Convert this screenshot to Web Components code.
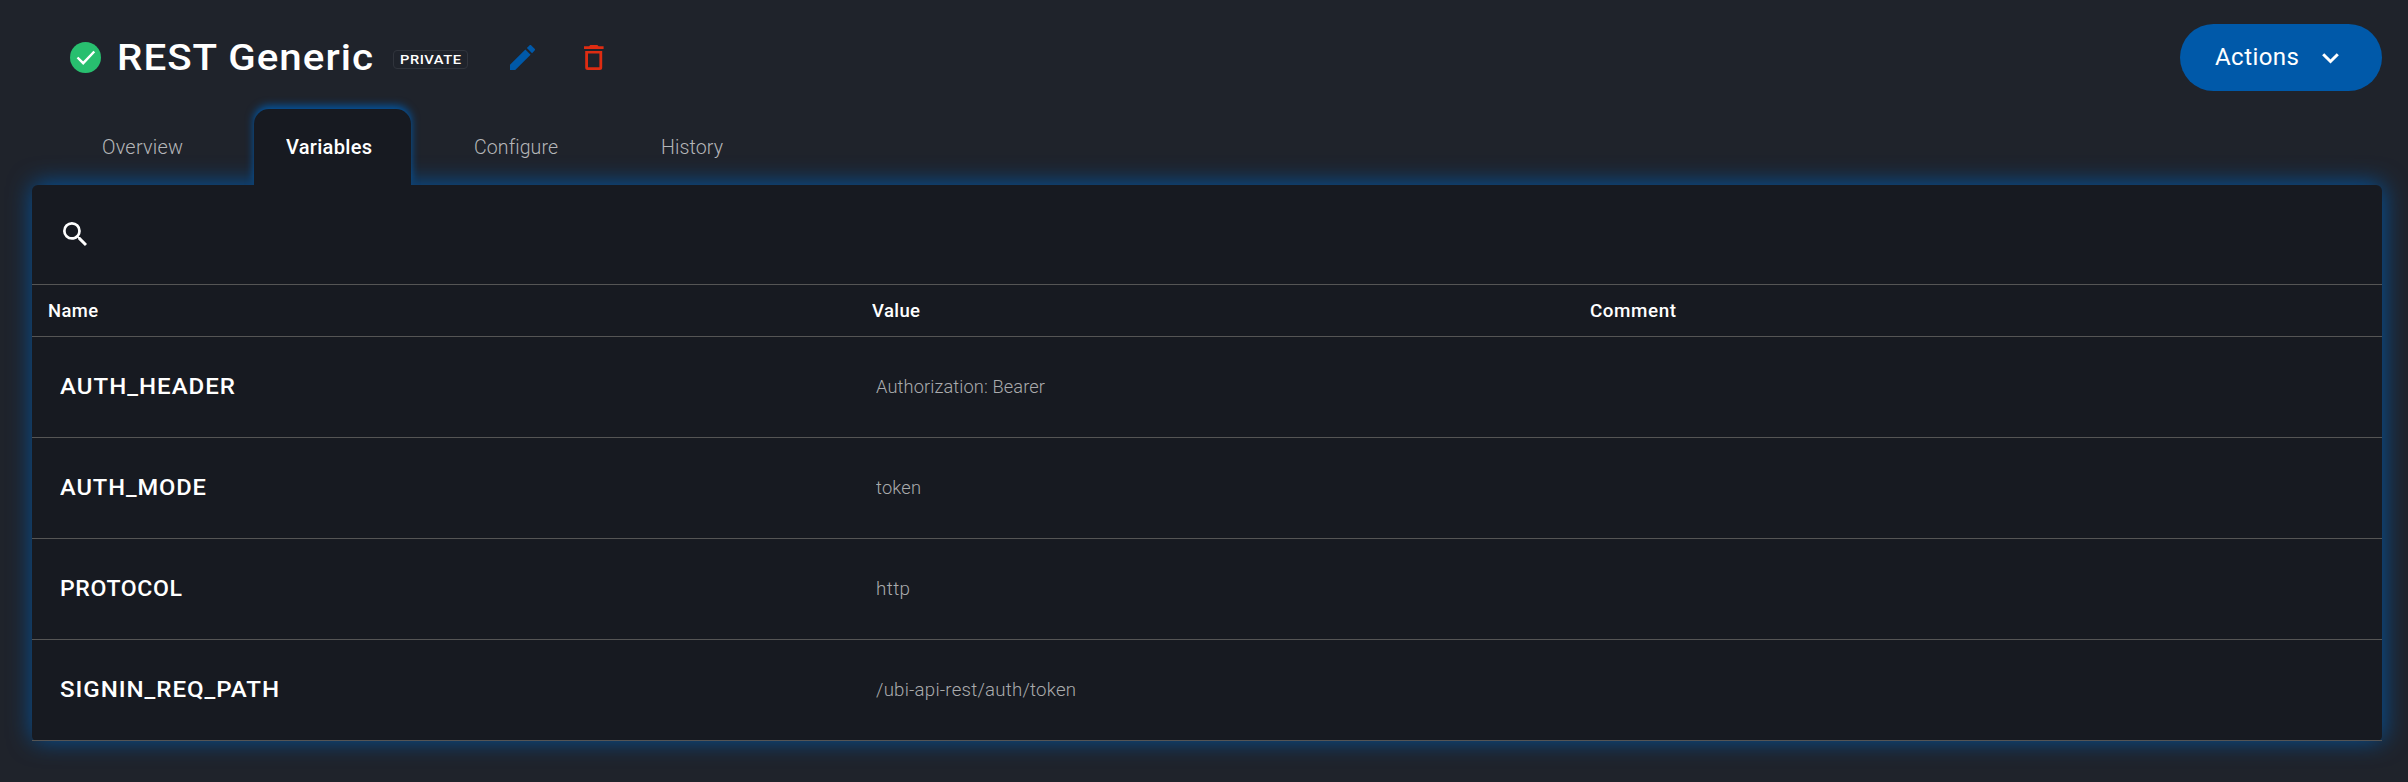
<!DOCTYPE html>
<html lang="en">
<head>
<meta charset="utf-8">
<title>REST Generic</title>
<style>
html,body{margin:0;height:100%;background:#1f232b}
body{font-family:Roboto,"Open Sans",sans-serif;color:#fff;overflow:hidden}
</style>
</head>
<body>
<app-page></app-page>
<script>
const define = (name, html, init) => {
  const t = document.createElement('template');
  t.innerHTML = html;
  customElements.define(name, class extends HTMLElement {
    constructor() {
      super();
      this.attachShadow({mode: 'open'}).append(t.content.cloneNode(true));
    }
    connectedCallback() { if (init) init(this, this.shadowRoot); }
  });
};

/* A single line of text, widened (mostly by glyph width, partly by tracking) to span the given width. */
define('fit-text', `<style>:host{display:block;white-space:nowrap;font-variant-ligatures:none}span{display:inline-block;transform-origin:0 50%}</style><span><slot></slot></span>`, (el, root) => {
  const span = root.querySelector('span');
  const n = el.textContent.length;
  const natural = span.getBoundingClientRect().width;
  const target = +el.getAttribute('width');
  if (target && natural) {
    const scale = 1 + (target / natural - 1) * 0.6;
    span.style.letterSpacing = ((target / scale - natural) / (n - 1)).toFixed(3) + 'px';
    span.style.transform = 'scaleX(' + scale.toFixed(4) + ')';
    el.style.width = target + 'px';
  }
});

define('status-icon', `<style>:host{display:block;width:31px;height:31px}svg{display:block}</style>
<svg width="31" height="31" viewBox="0 0 31 31"><circle cx="15.5" cy="15.5" r="15.5" fill="#28bf6f"/><path d="M7.500 15.500l5.700 5.700L24.300 9.500" fill="none" stroke="#fff" stroke-width="2.400"/></svg>`);

define('edit-icon', `<style>:host{display:block;width:25px;height:25px}svg{display:block}</style>
<svg width="25" height="25" viewBox="3 3 18 18"><path fill="#0059a9" d="M3 17.250V21h3.750L17.810 9.940l-3.750-3.750L3 17.250zM20.710 7.040a1 1 0 0 0 0-1.410l-2.340-2.340a1 1 0 0 0-1.410 0l-1.830 1.830 3.750 3.750 1.830-1.830z"/></svg>`);

define('delete-icon', `<style>:host{display:block;width:20px;height:25px}svg{display:block}</style>
<svg width="20" height="25" viewBox="0 0 20 25"><path fill="#de2c12" fill-rule="evenodd" d="M0 1.300H5L6.300 0H13.300L14.600 1.300H19.600V4H0zM1.200 6H18.200V22.500Q18.200 25 15.700 25H3.700Q1.200 25 1.200 22.500zM4 8.500V22.300H15.400V8.500z"/></svg>`);

define('search-icon', `<style>:host{display:block;width:24px;height:24px}svg{display:block}</style>
<svg width="24" height="24" viewBox="3 3 17.490 17.490"><path fill="#fff" d="M15.500 14h-.79l-.28-.27A6.471 6.471 0 0 0 16 9.500 6.500 6.500 0 1 0 9.500 16c1.610 0 3.090-.59 4.230-1.570l.27.28v.79l5 4.990L20.490 19l-4.990-5zm-6 0C7.010 14 5 11.990 5 9.500S7.010 5 9.500 5 14 7.010 14 9.500 11.990 14 9.500 14z"/></svg>`);

define('tag-badge', `<style>:host{display:flex;box-sizing:border-box;width:75px;height:19px;border:1px solid #30343c;border-radius:4px;padding-left:6px;font:500 13.500px/17px Roboto,sans-serif}</style><slot></slot>`);

define('action-button', `<style>:host{display:flex;box-sizing:border-box;width:202px;height:67px;border-radius:33.500px;background:#0059a9;padding-left:35px;align-items:center;font:400 23px/28px Roboto,sans-serif}
svg{display:block;margin-left:23px;margin-top:1px}</style><slot></slot>
<svg width="17" height="11" viewBox="0 0 17 11"><path d="M1.200 1.200l7.300 7.300 7.300-7.300" fill="none" stroke="#fff" stroke-width="3"/></svg>`);

define('page-header', `<style>:host{display:flex;height:109px;box-sizing:border-box;padding:24px 26px 0 70px;align-items:flex-start}
status-icon{margin-top:18px}
.title{font:500 37.500px/44px Roboto,sans-serif;margin:11px 0 0 16px}
tag-badge{margin:26px 0 0 20px}
edit-icon{margin:21px 0 0 42px}
delete-icon{margin:21px 0 0 49px}
action-button{margin-left:auto}</style>
<status-icon></status-icon><fit-text class="title" width="256">REST Generic</fit-text>
<tag-badge><fit-text width="61">PRIVATE</fit-text></tag-badge>
<edit-icon></edit-icon><delete-icon></delete-icon>
<action-button><fit-text width="84">Actions</fit-text></action-button>`);

define('nav-tab', `<style>:host{display:block;box-sizing:border-box;height:76px;padding-top:27px;font:300 19.300px/24px Roboto,sans-serif;color:#b5b6b9}
:host([active]){position:relative;z-index:2;color:#fff;font-weight:500;background:#171a21;border-radius:15px 15px 0 0;box-shadow:0 -3px 9px #0059a9;clip-path:inset(-20px -20px 0 -20px)}</style><slot></slot>`);

define('tab-bar', `<style>:host{display:grid;grid-template-columns:152px 157px 188px 190px;padding-left:102px}
nav-tab[active]{padding-left:32px}
.c{padding-left:63px}.h{padding-left:62px}</style>
<nav-tab><fit-text width="81">Overview</fit-text></nav-tab>
<nav-tab active><fit-text width="86">Variables</fit-text></nav-tab>
<nav-tab class="c"><fit-text width="84">Configure</fit-text></nav-tab>
<nav-tab class="h"><fit-text width="62">History</fit-text></nav-tab>`);

define('table-head', `<style>:host{display:grid;grid-template-columns:824px 718px 1fr;height:51px;border-bottom:1px solid #555;padding-left:16px;font:500 17.700px/22px Roboto,sans-serif;align-items:center}</style>
<fit-text width="50">Name</fit-text><fit-text width="48">Value</fit-text><fit-text width="86">Comment</fit-text>`);

define('variable-row', `<style>:host{display:grid;grid-template-columns:816px 1fr;height:100px;border-bottom:1px solid #555;padding-left:28px;align-items:center}
.name{font:500 21.800px/26px Roboto,sans-serif}.value{font:300 17.900px/22px Roboto,sans-serif;color:#aaabad}</style>
<div class="name"><slot name="name"></slot></div><div class="value"><slot></slot></div>`);

define('variables-panel', `<style>:host{display:block;position:relative;z-index:1;margin:0 26px 0 32px;height:556px;background:#171a21;border-radius:6px 6px 5px 5px;box-shadow:1px -1px 25px rgba(0,89,169,.92)}
.search{height:99px;box-sizing:border-box;padding:37px 31px 0}.line{height:1px;background:#555}</style>
<div class="search"><search-icon></search-icon></div><div class="line"></div><table-head></table-head>
<variable-row><fit-text slot="name" width="175">AUTH_HEADER</fit-text><fit-text width="169">Authorization: Bearer</fit-text></variable-row>
<variable-row><fit-text slot="name" width="146">AUTH_MODE</fit-text><fit-text width="45">token</fit-text></variable-row>
<variable-row><fit-text slot="name" width="122">PROTOCOL</fit-text><fit-text width="34">http</fit-text></variable-row>
<variable-row><fit-text slot="name" width="219">SIGNIN_REQ_PATH</fit-text><fit-text width="200">/ubi-api-rest/auth/token</fit-text></variable-row>`);

define('app-page', `<style>:host{display:block;height:782px;background:#1f232b}</style>
<page-header></page-header><tab-bar></tab-bar><variables-panel></variables-panel>`);
</script>
</body>
</html>
